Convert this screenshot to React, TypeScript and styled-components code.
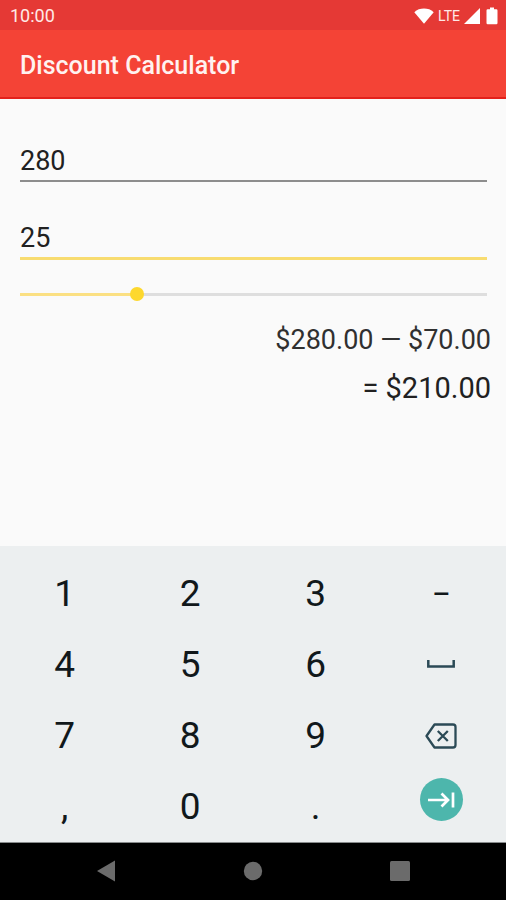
import React, { useState } from "react";
import styled, { createGlobalStyle } from "styled-components";

const GlobalStyle = createGlobalStyle`
  * { box-sizing: border-box; }
  body { margin: 0; background: #fafafa; font-family: Roboto, sans-serif; }
  button, input { font: inherit; color: inherit; }
`;

const Screen = styled.div`
  display: flex;
  flex-direction: column;
  min-height: 100vh;
`;

const StatusBar = styled.div`
  display: flex;
  align-items: center;
  height: 30px;
  padding: 1px 8px 0 10px;
  background: #e53935;
  color: #ffe9e7;
  font-size: 18px;
`;

const StatusIcons = styled.div`
  display: flex;
  align-items: center;
  gap: 4px;
  margin-left: auto;
  font-size: 14px;
  svg { display: block; fill: #fff; }
  svg:last-child { margin-left: 2px; }
`;

const AppBar = styled.header`
  display: flex;
  align-items: center;
  height: 69px;
  padding: 4px 20px 0;
  background: #f44336;
  border-bottom: 2px solid #e3211b;
`;

const Title = styled.h1`
  margin: 0;
  color: #fff2f0;
  font-size: 25px;
  font-weight: 500;
  line-height: 32px;
`;

const Form = styled.main`
  flex: 1;
  padding: 40px 19px 20px 20px;
  color: #212121;
`;

const Field = styled.input<{ $active?: boolean }>`
  display: block;
  width: 100%;
  height: ${(p) => (p.$active ? 44 : 43)}px;
  margin-bottom: 34px;
  padding: 2px 0 0;
  border: 0;
  border-bottom: ${(p) => (p.$active ? "3px solid #f8dc70" : "2px solid #8d8d8d")};
  border-radius: 0;
  outline: 0;
  background: none;
  font-size: 27px;
`;

const Slider = styled.input`
  appearance: none;
  display: block;
  width: calc(100% + 14px);
  height: 20px;
  margin: -10px -7px 0;
  background: linear-gradient(
      to right,
      #fbe083 var(--filled),
      #dedede var(--filled)
    )
    center / calc(100% - 14px) 3px no-repeat;
  outline: 0;
  &::-webkit-slider-thumb {
    appearance: none;
    width: 14px;
    height: 14px;
    border: 0;
    border-radius: 50%;
    background: #fdd82e;
  }
`;

const Results = styled.div`
  display: flex;
  flex-direction: column;
  align-items: flex-end;
  margin: 12px -4px 0 0;
  line-height: 48px;
`;

const Breakdown = styled.output`
  font-size: 27px;
  color: #303030;
`;

const Total = styled.output`
  font-size: 29px;
`;

const Keypad = styled.div`
  display: grid;
  grid-template-columns: repeat(4, 1fr);
  grid-auto-rows: 71px;
  padding: 12px 2px 0;
  background: #eceff0;
  border-bottom: 1px solid #888b8c;
`;

const Key = styled.button`
  display: flex;
  align-items: center;
  justify-content: center;
  padding: 0;
  border: 0;
  background: none;
  color: #11181b;
  font-size: 37px;
  svg { display: block; fill: none; stroke: #2b4a56; }
`;

const MinusKey = styled(Key)`
  font-size: 34px;
`;

const NextKey = styled(Key)`
  align-items: flex-start;
  padding-top: 7px;
`;

const NextDisc = styled.span`
  display: grid;
  place-items: center;
  width: 43px;
  height: 43px;
  border-radius: 50%;
  background: #4db6ac;
  svg { stroke: #fff; }
`;

const NavBar = styled.nav`
  display: grid;
  grid-template-columns: repeat(3, 1fr);
  height: 57px;
  padding: 0 33px 2px;
  background: #000;
`;

const NavButton = styled.button`
  display: grid;
  place-items: center;
  padding: 0;
  border: 0;
  background: none;
  svg { display: block; fill: #6b6b6b; }
`;

const money = (n: number) => `$${n.toFixed(2)}`;

export default function App() {
  const [price, setPrice] = useState("280");
  const [percent, setPercent] = useState("25");

  const full = Number(price) || 0;
  const rate = Math.min(100, Math.max(0, Number(percent) || 0));
  const off = (full * rate) / 100;

  const type = (c: string) => setPercent((p) => p + c);
  const digit = (c: string) => (
    <Key key={c} type="button" onClick={() => type(c)}>{c}</Key>
  );

  return (
    <Screen>
      <GlobalStyle />
      <StatusBar>
        <span>10:00</span>
        <StatusIcons>
          <svg width="20" height="16" viewBox="0 0 20 16" aria-label="Wi-Fi">
            <path d="M.3 4.200C3 1.700 6.300.6 10 .6s7 1.100 9.700 3.600L10 15.700z" />
          </svg>
          <span>LTE</span>
          <svg width="16" height="16" viewBox="0 0 16 16" aria-label="Signal">
            <path d="M16 0v16H0z" />
          </svg>
          <svg width="12" height="18" viewBox="0 0 12 18" aria-label="Battery">
            <path d="M1.700 2.200H4V.5h4v1.700h2.300q1.200 0 1.200 1.200v12.700q0 1.200-1.200 1.200H1.700q-1.200 0-1.200-1.200V3.400q0-1.200 1.200-1.200z" />
          </svg>
        </StatusIcons>
      </StatusBar>
      <AppBar>
        <Title>Discount Calculator</Title>
      </AppBar>
      <Form>
        <Field
          aria-label="Price"
          inputMode="decimal"
          value={price}
          onChange={(e) => setPrice(e.target.value)}
        />
        <Field
          $active
          aria-label="Discount percent"
          inputMode="decimal"
          value={percent}
          onChange={(e) => setPercent(e.target.value)}
        />
        <Slider
          type="range"
          aria-label="Discount slider"
          min={0}
          max={100}
          value={rate}
          onChange={(e) => setPercent(e.target.value)}
          style={{ "--filled": `${rate}%` } as React.CSSProperties}
        />
        <Results>
          <Breakdown>{money(full)} — {money(off)}</Breakdown>
          <Total>= {money(full - off)}</Total>
        </Results>
      </Form>
      <Keypad>
        {["1", "2", "3"].map(digit)}
        <MinusKey type="button" onClick={() => type("-")}>−</MinusKey>
        {["4", "5", "6"].map(digit)}
        <Key type="button" aria-label="Space" onClick={() => type(" ")}>
          <svg width="30" height="12" viewBox="0 0 30 12" strokeWidth="2.500">
            <path d="M2.300 1v6.500h25.400V1" />
          </svg>
        </Key>
        {["7", "8", "9"].map(digit)}
        <Key type="button" aria-label="Backspace" onClick={() => setPercent((p) => p.slice(0, -1))}>
          <svg width="32" height="26" viewBox="0 0 32 26" strokeWidth="2.300" strokeLinejoin="round">
            <path d="M9.500 1.500H28q2.500 0 2.500 2.500v18q0 2.500-2.500 2.500H9.500L1.500 13z" />
            <path d="M12.800 8l10 10M22.800 8l-10 10" />
          </svg>
        </Key>
        {[",", "0", "."].map(digit)}
        <NextKey type="button" aria-label="Next field">
          <NextDisc>
            <svg width="28" height="18" viewBox="0 0 28 18" strokeWidth="2.700">
              <path d="M1 9h20M14.500 2.500L21 9l-6.500 6.500M26 1.500v15" />
            </svg>
          </NextDisc>
        </NextKey>
      </Keypad>
      <NavBar>
        <NavButton type="button" aria-label="Back">
          <svg width="20" height="22" viewBox="0 0 20 22"><path d="M19 .5v21L1 11z" /></svg>
        </NavButton>
        <NavButton type="button" aria-label="Home">
          <svg width="20" height="20" viewBox="0 0 20 20"><circle cx="10" cy="10" r="9.200" /></svg>
        </NavButton>
        <NavButton type="button" aria-label="Recent apps">
          <svg width="20" height="20" viewBox="0 0 20 20"><rect width="20" height="20" rx="1.500" /></svg>
        </NavButton>
      </NavBar>
    </Screen>
  );
}
